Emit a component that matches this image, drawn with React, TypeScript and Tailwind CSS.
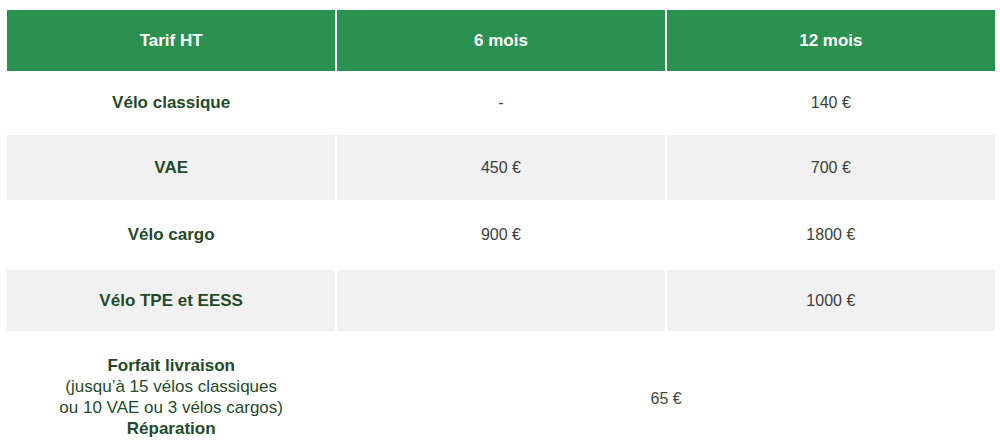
import React from "react";

const rows = [
  { label: "Vélo classique", a: "-", b: "140 €", h: "h-[64px]", bg: "bg-white" },
  { label: "VAE", a: "450 €", b: "700 €", h: "h-[65px]", bg: "bg-[#f1f1f1]" },
  { label: "Vélo cargo", a: "900 €", b: "1800 €", h: "h-[70px]", bg: "bg-white" },
  { label: "Vélo TPE et EESS", a: "", b: "1000 €", h: "h-[61px]", bg: "bg-[#f1f1f1]" },
];

export default function App() {
  return (
    <div className="w-[1000px] h-[446px] bg-white overflow-hidden pt-[10px] pl-[7px]" style={{ fontFamily: '"Liberation Sans", Arial, sans-serif' }}>
      <table className="w-[988px] table-fixed border-collapse">
        <thead>
          <tr className="h-[61px] bg-[#2b9150] text-white text-[17px] font-bold">
            <th className="border-r-2 border-white font-bold">Tarif HT</th>
            <th className="border-r-2 border-white font-bold">6 mois</th>
            <th className="font-bold">12 mois</th>
          </tr>
        </thead>
        <tbody>
          {rows.map((r) => (
            <tr key={r.label} className={`${r.h} ${r.bg}`}>
              <td className="border-r-2 border-white text-center text-[17px] font-bold text-[#1f4a2b]">{r.label}</td>
              <td className="border-r-2 border-white text-center text-[16px] text-[#3c3f3c]">{r.a}</td>
              <td className="text-center text-[16px] text-[#3c3f3c]">{r.b}</td>
            </tr>
          ))}
          <tr className="h-[116px] bg-white">
            <td className="border-r-2 border-white text-center align-top pt-[24px] text-[17px] leading-[21px] text-[#1f4a2b]">
              <div className="font-bold">Forfait livraison</div>
              <div>(jusqu’à 15 vélos classiques</div>
              <div>ou 10 VAE ou 3 vélos cargos)</div>
              <div className="font-bold">Réparation</div>
            </td>
            <td colSpan={2} className="text-center align-top pt-[56px] text-[16px] text-[#3c4a3e]">65 €</td>
          </tr>
        </tbody>
      </table>
    </div>
  );
}
